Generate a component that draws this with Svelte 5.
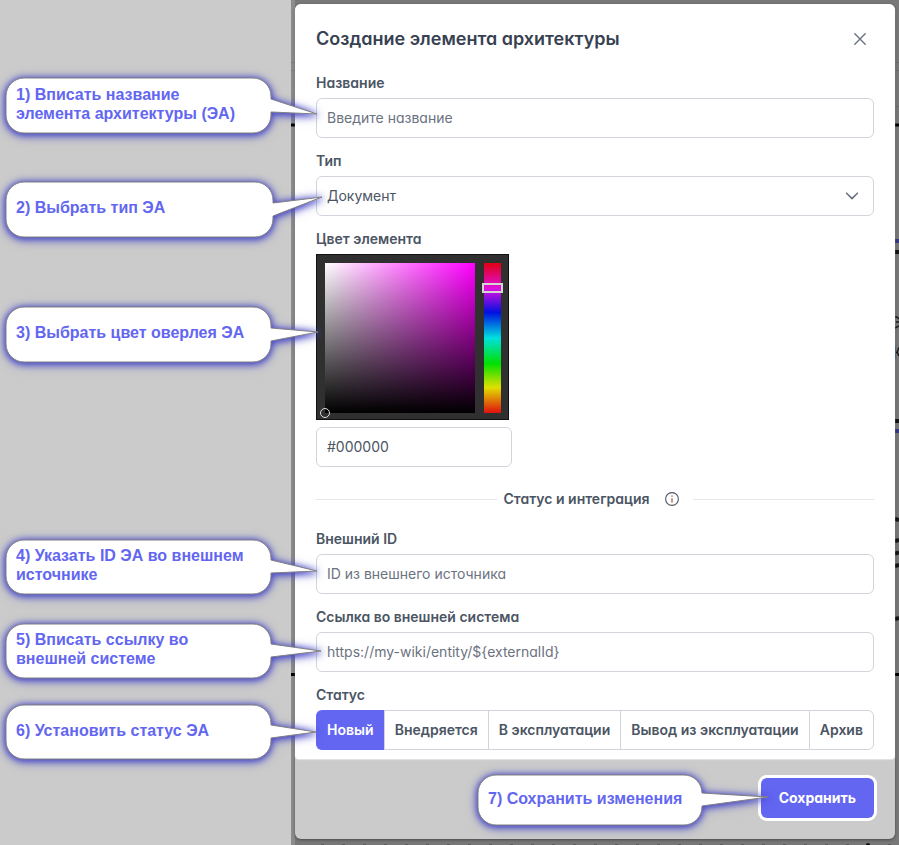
<script>
  let name = $state('');
  let kind = $state('Документ');
  let color = $state('#000000');
  let hue = $state(86);
  let externalId = $state('');
  let link = $state('');
  let status = $state('Новый');

  const kinds = ['Документ', 'Процесс', 'Система'];
  const statuses = ['Новый', 'Внедряется', 'В эксплуатации', 'Вывод из эксплуатации', 'Архив'];
  const linkHint = 'https://my-wiki/entity/${externalId}';

  // base: where the tail leaves the bubble; tip: where it points, both relative to the bubble
  const callouts = [
    { x: 6, y: 78, w: 265, h: 55, base: 21, tip: [311, 36], text: '1) Вписать название элемента архитектуры (ЭА)' },
    { x: 6, y: 182, w: 267, h: 55, base: 21, tip: [316, 15], text: '2) Выбрать тип ЭА' },
    { x: 6, y: 307, w: 265, h: 55, base: 21, tip: [312, 25], text: '3) Выбрать цвет оверлея ЭА' },
    { x: 6, y: 540, w: 265, h: 54, base: 20, tip: [311, 31], text: '4) Указать ID ЭА во внешнем источнике' },
    { x: 6, y: 624, w: 265, h: 54, base: 20, tip: [315, 27], text: '5) Вписать ссылку во внешней системе' },
    { x: 6, y: 705, w: 265, h: 54, base: 20, tip: [310, 27], text: '6) Установить статус ЭА' },
    { x: 478, y: 775, w: 224, h: 50, base: 18, tip: [290, 22], text: '7) Сохранить изменения' }
  ];

  function bubble({ w, h, base, tip }) {
    const r = 18;
    const arc = `A${r} ${r} 0 0 1`;
    return `M${r} 0H${w - r}${arc} ${w} ${r}V${base}L${tip[0]} ${tip[1]}L${w} ${base + 13}V${h - r}${arc} ${w - r} ${h}H${r}${arc} 0 ${h - r}V${r}${arc} ${r} 0Z`;
  }
</script>

<div class="page">
  <div class="side"></div>
  <div class="backdrop">
    <svg class="canvas left" width="4" height="845" aria-hidden="true">
      <path d="M0 62.5h4M0 70.5h4" stroke="#7c7c7c" />
      <path d="M0 125h4M0 674.500h4" stroke="#000" stroke-width="3" />
    </svg>
    <svg class="canvas right" width="4" height="845" aria-hidden="true">
      <path d="M0 62.5h4M0 70.5h4M0 106.500h4" stroke="#6c6c6c" />
      <path d="M0 125h4M0 674.500h4" stroke="#000" stroke-width="3" />
      <path d="M0 241h4M0 431h4" stroke="#3a3a80" stroke-width="4" />
      <path d="M0 252h4M0 421h4M0 519l4 1M0 541l4-1M0 553.500l4-1M0 566l4-1M0 619l4-1" stroke="#161616" stroke-width="4" />
      <path d="M0 317h2l2 2M1 322h3M0 328l4-2M0 352.500h2l2-5M2 352l2 4" fill="none" stroke="#1a1a1a" stroke-width="1.500" />
      <path d="M.5 346v13" stroke="#3d6a8c" />
    </svg>
    <svg class="canvas bottom" width="604" height="4" aria-hidden="true">
      <path d="M26 3.500h578" stroke="#5c5c5c" stroke-dasharray="3 18" />
      <circle cx="573" cy="4" r="2" fill="#111" />
    </svg>
    <form class="dialog" onsubmit={(e) => e.preventDefault()}>
      <div class="card">
        <header>
          <h1>Создание элемента архитектуры</h1>
          <button class="close" type="button" aria-label="Закрыть">
            <svg width="12" height="12" viewBox="0 0 12 12"><path d="M.8.8 11.200 11.200M11.200.8.8 11.200" fill="none" stroke="#6b7280" stroke-width="1.400" stroke-linecap="round" /></svg>
          </button>
        </header>

        <div class="field">
          <label for="name">Название</label>
          <input id="name" class="box" type="text" placeholder="Введите название" bind:value={name} />
        </div>

        <div class="field">
          <label for="kind">Тип</label>
          <div class="select">
            <select id="kind" class="box" bind:value={kind}>
              {#each kinds as k}<option>{k}</option>{/each}
            </select>
            <svg width="14" height="8" viewBox="0 0 14 8" aria-hidden="true"><path d="M1.600 1.200 7 6.600l5.400-5.400" fill="none" stroke="#6b7280" stroke-width="1.600" stroke-linecap="round" stroke-linejoin="round" /></svg>
          </div>
        </div>

        <div class="field">
          <label for="color">Цвет элемента</label>
          <div class="picker">
            <div class="shade"><button class="handle" type="button" aria-label="Оттенок"></button></div>
            <input class="hue" type="range" min="0" max="100" aria-label="Тон" bind:value={hue} />
          </div>
          <input id="color" class="box hex" type="text" bind:value={color} />
        </div>

        <div class="divider">
          <h2>Статус и интеграция</h2>
          <svg width="14" height="14" viewBox="0 0 14 14" aria-hidden="true">
            <circle cx="7" cy="7" r="6.400" fill="none" stroke="#4b5563" stroke-width="1.100" />
            <path d="M7 6.200v4.300" stroke="#a0503c" stroke-width="1.200" />
            <path d="M7 3.500v1.300" stroke="#a0503c" stroke-width="1.300" />
          </svg>
        </div>

        <div class="field">
          <label for="external">Внешний ID</label>
          <input id="external" class="box" type="text" placeholder="ID из внешнего источника" bind:value={externalId} />
        </div>

        <div class="field">
          <label for="link">Ссылка во внешней система</label>
          <input id="link" class="box" type="text" placeholder={linkHint} bind:value={link} />
        </div>

        <div class="field">
          <span class="label" id="status">Статус</span>
          <div class="group" role="group" aria-labelledby="status">
            {#each statuses as s}
              <button type="button" class:active={s === status} aria-pressed={s === status} onclick={() => (status = s)}>{s}</button>
            {/each}
          </div>
        </div>
      </div>
      <footer>
        <button class="save" type="submit">Сохранить</button>
      </footer>
    </form>
  </div>

  {#each callouts as c}
    <div class="callout" style="left: {c.x}px; top: {c.y}px; width: {c.w}px; height: {c.h}px">
      <svg width={c.w} height={c.h} aria-hidden="true"><path d={bubble(c)} /></svg>
      <p>{c.text}</p>
    </div>
  {/each}
</div>

<style>
  .page {
    position: relative;
    display: grid;
    grid-template-columns: 291px minmax(0, 1fr);
    min-height: 100vh;
    overflow: hidden;
    font-family: Inter, 'Noto Sans', sans-serif;
    font-feature-settings: 'cv02', 'cv03', 'cv04', 'cv11';
    font-size: 14px;
    color: #4b5563;
  }
  * {
    box-sizing: border-box;
  }
  button,
  input,
  select {
    font: inherit;
    font-feature-settings: inherit;
    color: inherit;
    margin: 0;
  }
  .side {
    background: #cbcbcb;
  }
  .backdrop {
    position: relative;
    padding: 4px 4px 6px;
    background: linear-gradient(90deg, #8c8c8c, #8c8c8c 4px, #787878 4px);
  }
  .canvas {
    position: absolute;
    top: 0;
  }
  .left {
    left: 0;
  }
  .right {
    right: 0;
  }
  .bottom {
    top: auto;
    bottom: 0;
    left: 4px;
  }
  .dialog {
    position: relative;
    border-radius: 6px;
    background: #cbcbcb;
    box-shadow: 0 1px 3px rgba(0, 0, 0, 0.4);
  }
  .card {
    display: flex;
    flex-direction: column;
    gap: 15px;
    padding: 21px 21px 9px;
    border-radius: 6px 6px 4px 4px;
    background: #fff;
    box-shadow: 0 1px 1px #e4e4e4;
  }
  header {
    display: flex;
    align-items: center;
    justify-content: space-between;
    margin-bottom: 7px;
  }
  h1 {
    margin: 0;
    font-size: 18px;
    line-height: 28px;
    font-weight: 600;
    color: #374151;
  }
  .close {
    display: flex;
    align-items: center;
    justify-content: center;
    width: 28px;
    height: 28px;
    padding: 0;
    border: 0;
    background: none;
  }
  .field {
    display: flex;
    flex-direction: column;
  }
  label,
  .label {
    margin-bottom: 8px;
    line-height: 15px;
    font-weight: 600;
  }
  .box {
    width: 100%;
    height: 40px;
    padding: 0 10px 2px;
    border: 1px solid #d1d5db;
    border-radius: 6px;
    background: #fff;
  }
  .box::placeholder {
    color: #6b7280;
    opacity: 1;
  }
  .select {
    position: relative;
  }
  .select select {
    display: block;
    appearance: none;
  }
  .select svg {
    position: absolute;
    right: 15px;
    top: 16px;
    pointer-events: none;
  }
  .picker {
    display: flex;
    align-self: flex-start;
    gap: 9px;
    margin-bottom: 7px;
    padding: 8px 7px 6px 8px;
    border: 1px solid #111;
    background: #303030;
  }
  .shade {
    position: relative;
    width: 150px;
    height: 150px;
    background: linear-gradient(0deg, #000, transparent), linear-gradient(90deg, #fff, #f0f);
  }
  .handle {
    position: absolute;
    left: -5px;
    bottom: -5px;
    width: 10px;
    height: 10px;
    padding: 0;
    border: 1px solid #ddd;
    border-radius: 50%;
    background: none;
  }
  .hue {
    appearance: none;
    writing-mode: vertical-lr;
    direction: rtl;
    width: 17px;
    height: 150px;
    background: linear-gradient(#e00010, #e010e0 17%, #0010e0 33%, #00e0e0 50%, #00e000 67%, #e0e000 83%, #e01010);
  }
  .hue::-webkit-slider-thumb {
    appearance: none;
    width: 21px;
    height: 10px;
    margin-left: -1px;
    border: 2px solid #d4d4d4;
    background: transparent;
  }
  .hex {
    width: 196px;
  }
  .divider {
    display: flex;
    align-items: center;
    margin: 5px 0;
    height: 24px;
  }
  .divider::before,
  .divider::after {
    content: '';
    flex: 1;
    height: 1px;
    background: #e5e7eb;
  }
  .divider h2 {
    margin: 0 16px 0 7px;
    font-size: 14px;
    line-height: 24px;
    font-weight: 600;
  }
  .divider svg {
    margin-right: 14px;
  }
  .group {
    display: flex;
  }
  .group button {
    flex: 1 1 auto;
    height: 40px;
    padding: 0 10px 2px;
    border: 1px solid #d1d5db;
    border-right-width: 0;
    background: #fff;
    font-weight: 600;
    white-space: nowrap;
  }
  .group button:first-child {
    border-radius: 6px 0 0 6px;
  }
  .group button:last-child {
    border-right-width: 1px;
    border-radius: 0 6px 6px 0;
  }
  .group button.active {
    border-color: #6366f1;
    background: #6366f1;
    color: #fff;
  }
  footer {
    display: flex;
    justify-content: flex-end;
    padding: 19px 21px 21px;
  }
  .save {
    height: 40px;
    padding: 0 18px 2px;
    border: 0;
    border-radius: 6px;
    background: #6366f1;
    box-shadow: 0 0 0 3px #fff;
    color: #fff;
    font-weight: 700;
  }
  .callout {
    position: absolute;
    display: flex;
    align-items: center;
    padding: 0 16px 4px 10px;
  }
  .callout svg {
    position: absolute;
    inset: 0;
    overflow: visible;
    pointer-events: none;
    filter: drop-shadow(0 1px 3px #4646c8) drop-shadow(0 1px 4px rgba(70, 70, 200, 0.7));
  }
  .callout path {
    fill: #fff;
    stroke: #808080;
    stroke-width: 1;
  }
  .callout p {
    position: relative;
    margin: 0;
    font: 700 16px/19px 'Liberation Sans', Arial, sans-serif;
    color: #6366f1;
  }
</style>
